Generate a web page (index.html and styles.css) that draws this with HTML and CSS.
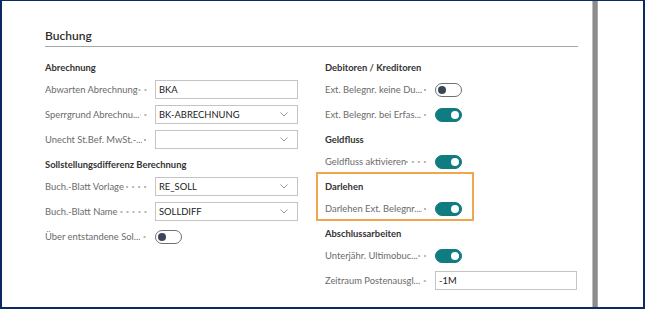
FILE: index.html
```html
<!DOCTYPE html>
<html lang="de">
<head>
<meta charset="utf-8">
<title>Buchung</title>
<link rel="stylesheet" href="styles.css">
</head>
<body>
<div class="frame">
  <div class="page">
    <div class="group-title">Buchung</div>
    <div class="cols">
      <div class="col">
        <div class="section">
          <div class="sec-title">Abrechnung</div>
          <div class="field">
            <div class="label"><span class="text">Abwarten Abrechnung</span><span class="leader"></span></div>
            <div class="input"><span class="value">BKA</span></div>
          </div>
          <div class="field">
            <div class="label"><span class="text">Sperrgrund Abrechnu...</span><span class="leader"></span></div>
            <div class="input select"><span class="value">BK-ABRECHNUNG</span><svg class="chev" width="8" height="5" viewBox="0 0 8 5"><path d="M0.5 0.5 L4 4 L7.5 0.5" fill="none" stroke="#9a9a9a" stroke-width="1"/></svg></div>
          </div>
          <div class="field">
            <div class="label"><span class="text">Unecht St.Bef. MwSt.-...</span><span class="leader"></span></div>
            <div class="input select"><span class="value"></span><svg class="chev" width="8" height="5" viewBox="0 0 8 5"><path d="M0.5 0.5 L4 4 L7.5 0.5" fill="none" stroke="#9a9a9a" stroke-width="1"/></svg></div>
          </div>
        </div>
        <div class="section">
          <div class="sec-title">Sollstellungsdifferenz Berechnung</div>
          <div class="field">
            <div class="label"><span class="text">Buch.-Blatt Vorlage</span><span class="leader"></span></div>
            <div class="input select"><span class="value">RE_SOLL</span><svg class="chev" width="8" height="5" viewBox="0 0 8 5"><path d="M0.5 0.5 L4 4 L7.5 0.5" fill="none" stroke="#9a9a9a" stroke-width="1"/></svg></div>
          </div>
          <div class="field">
            <div class="label"><span class="text">Buch.-Blatt Name</span><span class="leader"></span></div>
            <div class="input select"><span class="value">SOLLDIFF</span><svg class="chev" width="8" height="5" viewBox="0 0 8 5"><path d="M0.5 0.5 L4 4 L7.5 0.5" fill="none" stroke="#9a9a9a" stroke-width="1"/></svg></div>
          </div>
          <div class="field">
            <div class="label"><span class="text">Über entstandene Sol...</span><span class="leader"></span></div>
            <div class="toggle"><span class="knob"></span></div>
          </div>
        </div>
      </div>
      <div class="col">
        <div class="section">
          <div class="sec-title">Debitoren / Kreditoren</div>
          <div class="field">
            <div class="label"><span class="text">Ext. Belegnr. keine Du...</span><span class="leader"></span></div>
            <div class="toggle"><span class="knob"></span></div>
          </div>
          <div class="field">
            <div class="label"><span class="text">Ext. Belegnr. bei Erfas...</span><span class="leader"></span></div>
            <div class="toggle on"><span class="knob"></span></div>
          </div>
        </div>
        <div class="section">
          <div class="sec-title">Geldfluss</div>
          <div class="field">
            <div class="label"><span class="text">Geldfluss aktivieren</span><span class="leader"></span></div>
            <div class="toggle on"><span class="knob"></span></div>
          </div>
        </div>
        <div class="section highlight">
          <div class="sec-title">Darlehen</div>
          <div class="field">
            <div class="label"><span class="text">Darlehen Ext. Belegnr....</span><span class="leader"></span></div>
            <div class="toggle on"><span class="knob"></span></div>
          </div>
        </div>
        <div class="section">
          <div class="sec-title">Abschlussarbeiten</div>
          <div class="field">
            <div class="label"><span class="text">Unterjähr. Ultimobuc...</span><span class="leader"></span></div>
            <div class="toggle on"><span class="knob"></span></div>
          </div>
          <div class="field">
            <div class="label"><span class="text">Zeitraum Postenausgl...</span><span class="leader"></span></div>
            <div class="input narrow"><span class="value">-1M</span></div>
          </div>
        </div>
      </div>
    </div>
  </div>
  <div class="scrollbar"></div>
  <div class="rest"></div>
</div>
</body>
</html>
```

FILE: styles.css
```css
* { box-sizing: border-box; }
html, body { margin: 0; padding: 0; background: #ffffff; }
body {
  font-family: "Lato", "Open Sans", sans-serif;
  font-size: 9.4px;
  color: #333333;
}
.frame {
  width: 645px;
  height: 309px;
  border: 2px solid #0b2a60;
  border-top-width: 1px;
  display: flex;
  background: #ffffff;
  overflow: hidden;
}
.page {
  width: 590px;
  padding: 27px 14px 0 43px;
}
.group-title {
  font-size: 12px;
  font-weight: 600;
  line-height: 16px;
  color: #2f2f2f;
  padding-bottom: 2px;
  border-bottom: 1px solid #a3a7ac;
  margin-bottom: 8px;
}
.cols {
  display: grid;
  grid-template-columns: 280px 1fr;
}
.section { position: relative; }
.sec-title {
  height: 22px;
  padding-top: 4px;
  line-height: 18px;
  font-weight: 700;
  color: #333333;
}
.field {
  height: 25px;
  display: flex;
  align-items: center;
}
.label {
  width: 110px;
  padding-right: 6px;
  display: flex;
  align-items: center;
  color: #6b6b6b;
}
.text {
  white-space: nowrap;
  overflow: hidden;
  min-width: 0;
}
.leader {
  flex: 1 0 7px;
  height: 10px;
  background-image: radial-gradient(circle, #b5b5b5 0.7px, rgba(255,255,255,0) 1.1px);
  background-size: 6px 10px;
  background-position: right 1px center;
  background-repeat: repeat-x;
  margin-top: 1px;
}
.input {
  width: 143px;
  height: 19px;
  border: 1px solid #c4c4c4;
  display: flex;
  align-items: center;
  justify-content: space-between;
  padding: 0 9px 0 3px;
  color: #212121;
}
.input.narrow { width: 142px; }
.chev { display: block; }
.toggle {
  width: 27px;
  height: 14px;
  border-radius: 7px;
  border: 1px solid #6f6f6f;
  background: #ffffff;
  display: flex;
  align-items: center;
  padding: 0 2px;
}
.knob {
  width: 8px;
  height: 8px;
  border-radius: 50%;
  background: #3a4657;
}
.toggle.on {
  background: #0f7c81;
  border-color: #0f7c81;
  justify-content: flex-end;
}
.toggle.on .knob { background: #ffffff; }
.highlight::before {
  content: "";
  position: absolute;
  left: -9px;
  top: -2px;
  width: 154px;
  bottom: 0;
  border: 2px solid #f0a64c;
}
.scrollbar {
  width: 6px;
  background: #8c8c8c;
  border-left: 1px solid #bdbdbd;
  border-right: 1px solid #a8a8a8;
}
.rest { flex: 1; background: #ffffff; }
```
